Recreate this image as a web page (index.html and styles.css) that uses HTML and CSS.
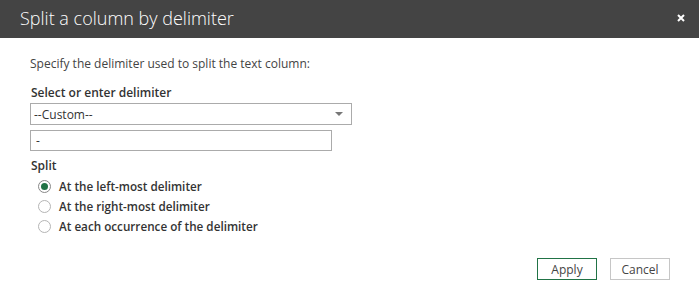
FILE: index.html
```html
<!DOCTYPE html>
<html lang="en">

<head>
    <title>Split a column by delimiter</title>
    <meta charset="UTF-8">
    <link rel="stylesheet" href="styles.css">
</head>

<body>
    <div class="sd-dialog">
        <div class="sd-header">
            <div class="sd-title">Split a column by delimiter</div>
            <span class="sd-close">
                <svg width="8" height="8" viewBox="0 0 8 8">
                    <path d="M1 1 L7 7 M7 1 L1 7" stroke="#fff" stroke-width="2" />
                </svg>
            </span>
        </div>

        <div class="sd-body">
            <p class="sd-intro">Specify the delimiter used to split the text column:</p>

            <div class="sd-label">Select or enter delimiter</div>
            <div class="sd-select">
                <span>--Custom--</span>
                <span class="sd-caret"></span>
            </div>
            <div class="sd-input">-</div>

            <div class="sd-label sd-split">Split</div>
            <div class="sd-options">
                <div class="sd-option">
                    <span class="sd-radio sd-checked"></span>
                    At the left-most delimiter
                </div>
                <div class="sd-option">
                    <span class="sd-radio"></span>
                    At the right-most delimiter
                </div>
                <div class="sd-option">
                    <span class="sd-radio"></span>
                    At each occurrence of the delimiter
                </div>
            </div>
        </div>

        <div class="sd-footer">
            <button class="sd-btn sd-primary">Apply</button>
            <button class="sd-btn">Cancel</button>
        </div>
    </div>
</body>

</html>
```

FILE: styles.css
```css
* {
    box-sizing: border-box;
    font-family: 'Open Sans', sans-serif;
}

body {
    margin: 0;
    background-color: #ffffff;
    color: #333333;
}

.sd-dialog {
    width: 699px;
    height: 308px;
    display: flex;
    flex-direction: column;
}

.sd-header {
    height: 38px;
    background-color: #444444;
    display: flex;
    align-items: center;
    padding: 0 14px 0 20px;
}

.sd-title {
    flex: 1;
    color: #ffffff;
    font-size: 18px;
    font-weight: 300;
    padding-bottom: 2px;
}

.sd-close {
    display: flex;
    margin-bottom: 2px;
}

.sd-body {
    flex: 1;
    padding: 0 30px;
}

.sd-intro {
    margin: 18px 0 13px 0;
    font-size: 12px;
    line-height: 16px;
    color: #444444;
}

.sd-label {
    font-size: 12px;
    line-height: 16px;
    font-weight: 600;
    color: #333333;
    margin-bottom: 2px;
    padding-left: 1px;
}

.sd-select {
    width: 322px;
    height: 22px;
    border: 1px solid #ababab;
    display: flex;
    align-items: center;
    padding: 0 8px 0 3px;
    font-size: 12px;
}

.sd-select span:first-child {
    flex: 1;
}

.sd-caret {
    width: 0;
    height: 0;
    border-left: 4px solid transparent;
    border-right: 4px solid transparent;
    border-top: 4px solid #777777;
}

.sd-input {
    width: 302px;
    height: 21px;
    margin-top: 5px;
    border: 1px solid #ababab;
    padding: 0 5px;
    font-size: 12px;
    line-height: 19px;
}

.sd-split {
    margin-top: 7px;
}

.sd-options {
    padding-left: 8px;
}

.sd-option {
    display: flex;
    align-items: center;
    height: 20px;
    font-size: 11.7px;
    font-weight: 600;
    color: #333333;
}

.sd-radio {
    width: 13px;
    height: 13px;
    border: 1px solid #b5b5b5;
    border-radius: 50%;
    margin-right: 8px;
    display: flex;
    align-items: center;
    justify-content: center;
}

.sd-checked {
    border-color: #888888;
}

.sd-checked:after {
    content: "";
    width: 7px;
    height: 7px;
    border-radius: 50%;
    background-color: #217346;
}

.sd-footer {
    display: flex;
    justify-content: flex-end;
    gap: 13px;
    padding: 0 29px 28px 0;
}

.sd-btn {
    width: 60px;
    height: 22px;
    background-color: #ffffff;
    border: 1px solid #c6c6c6;
    font-size: 12px;
    color: #444444;
    padding: 0;
}

.sd-primary {
    border-color: #217346;
}
```
